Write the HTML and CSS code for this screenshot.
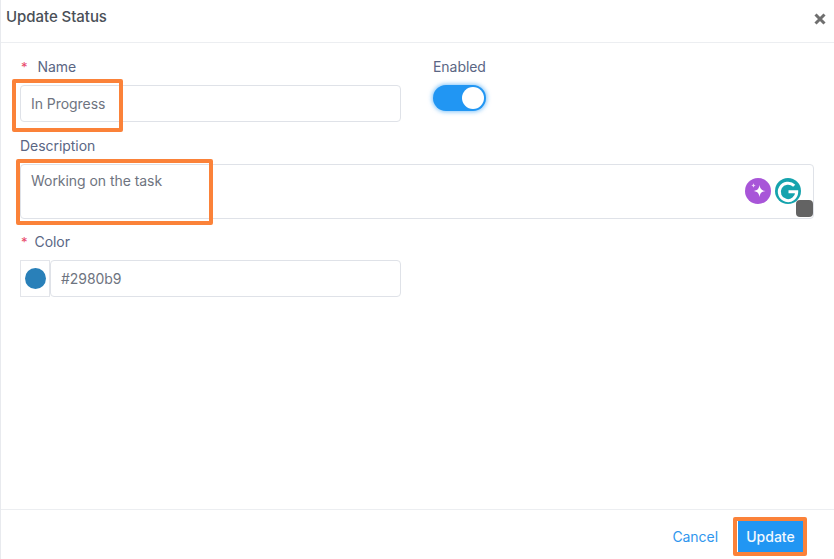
FILE: index.html
```html
<!DOCTYPE html>
<html lang="en">
<head>
<meta charset="utf-8">
<title>Update Status</title>
<link rel="stylesheet" href="styles.css">
</head>
<body>
<div class="dialog">
  <header class="head">
    <h1 class="title">Update Status</h1>
    <svg class="close" viewBox="0 0 12 12" width="12" height="12" aria-label="Close"><path d="M1.500 1.500l9 9M10.500 1.500l-9 9" stroke="#6f6f6f" stroke-width="3" fill="none"/></svg>
  </header>
  <main class="body">
    <div class="row-top">
      <div class="col-name">
        <label class="label"><span class="req">*</span><span class="name-text">Name</span></label>
        <div class="field-wrap">
          <div class="input">In Progress</div>
          <div class="mark mark-name"></div>
        </div>
      </div>
      <div class="col-enabled">
        <label class="label">Enabled</label>
        <div class="switch"><span class="knob"></span></div>
      </div>
    </div>
    <div class="col-desc">
      <label class="label">Description</label>
      <div class="field-wrap">
        <div class="textarea">Working on the task</div>
        <div class="mark mark-desc"></div>
        <div class="tools">
          <svg class="tool" viewBox="0 0 26 26" width="26" height="26"><circle cx="13" cy="13" r="13" fill="#a855d8"/><path d="M14.500 7c.6 4 2 5.400 6 6-4 .6-5.400 2-6 6-.6-4-2-5.400-6-6 4-.6 5.400-2 6-6z" fill="#fff"/><path d="M8.500 5c.2 1.600.8 2.200 2.300 2.400-1.500.2-2.100.8-2.300 2.400-.2-1.600-.8-2.200-2.300-2.400 1.500-.2 2.100-.8 2.300-2.400z" fill="#f1dcfa"/></svg>
          <svg class="tool" viewBox="0 0 26 26" width="26" height="26"><circle cx="13" cy="13" r="13" fill="#15a3ad"/><path d="M19.200 7.800A8.700 8.700 0 1 0 21.700 13.800H13.500" fill="none" stroke="#fff" stroke-width="3"/></svg>
          <span class="grip"></span>
        </div>
      </div>
    </div>
    <div class="col-color">
      <label class="label"><span class="req">*</span><span class="color-text">Color</span></label>
      <div class="color-row">
        <div class="swatch-box"><span class="swatch"></span></div>
        <div class="input color-input">#2980b9</div>
      </div>
    </div>
  </main>
  <footer class="foot">
    <a class="cancel">Cancel</a>
    <div class="update-wrap">
      <button class="update">Update</button>
      <div class="mark mark-update"></div>
    </div>
  </footer>
</div>
</body>
</html>
```

FILE: styles.css
```css
* { box-sizing: border-box; }
html, body { margin: 0; height: 100%; background: #fff; overflow: hidden; }
body { font-family: Inter, "Liberation Sans", sans-serif; font-size: 14px; letter-spacing: -.05px; color: #5b6478; }
.dialog { height: 559px; width: 834px; display: flex; flex-direction: column; border-left: 1px solid #e8eaee; }
.head { height: 43px; flex: none; display: flex; align-items: center; justify-content: space-between; padding: 0 8px 8px 5px; border-bottom: 1px solid #eceef1; }
.title { margin: 0; font-size: 15px; font-weight: 500; color: #4a4f57; line-height: 34px; }
.close { margin-top: 4px; }
.body { flex: 1; padding: 14px 20px 0 19px; display: flex; flex-direction: column; }
.row-top { display: flex; }
.col-name { width: 381px; }
.col-enabled { margin-left: 32px; }
.label { display: block; height: 20px; line-height: 20px; font-size: 14px; color: #5a6684; margin-bottom: 8px; }
.req { color: #e8476a; font-size: 13px; margin-left: 1px; }
.name-text { margin-left: 10px; }
.color-text { margin-left: 7px; }
.field-wrap { position: relative; }
.input { height: 37px; border: 1px solid #dfe2e8; border-radius: 4px; padding: 0 10px; line-height: 35px; font-size: 14px; color: #6e7480; }
.switch { width: 53px; height: 26px; margin-top: 3px; border-radius: 13px; background: #2196f3; box-shadow: 0 0 4px 1px rgba(33,150,243,.55); display: flex; align-items: center; justify-content: flex-end; padding-right: 2px; }
.knob { width: 22px; height: 22px; border-radius: 50%; background: #fff; }
.col-desc { margin-top: 14px; }
.textarea { height: 55px; border: 1px solid #dfe2e8; border-radius: 4px; padding: 6px 10px; line-height: 20px; font-size: 14px; color: #6e7480; }
.tools { position: absolute; right: 0; top: 0; width: 70px; height: 55px; }
.tool { position: absolute; top: 14px; }
.tool:nth-child(1) { left: 1px; }
.tool:nth-child(2) { left: 31px; }
.grip { position: absolute; left: 52px; top: 36px; width: 17px; height: 17px; border-radius: 4px; background: #636363; }
.col-color { margin-top: 13px; }
.color-row { display: flex; width: 381px; height: 37px; }
.swatch-box { width: 30px; border: 1px solid #e3e5ea; display: flex; align-items: center; justify-content: center; }
.swatch { width: 21px; height: 21px; border-radius: 50%; background: #2980b9; }
.color-input { flex: 1; }
.foot { height: 50px; flex: none; border-top: 1px solid #eceef1; display: flex; align-items: center; justify-content: flex-end; padding: 4px 31px 0 0; }
.cancel { color: #2f96ee; font-size: 14px; margin-right: 20px; }
.update-wrap { position: relative; }
.update { display: block; width: 65px; height: 32px; border: 0; background: #2196f3; color: #f2f8fe; font: 500 14px Inter, "Liberation Sans", sans-serif; padding: 0; }
.mark { position: absolute; border: 4px solid #fb8239; border-radius: 2px; pointer-events: none; }
.mark-name { left: -8px; top: -6px; width: 111px; height: 53px; }
.mark-desc { left: -4px; top: -5px; width: 197px; height: 66px; }
.mark-update { left: -5px; top: -4px; width: 74px; height: 39px; }
```
